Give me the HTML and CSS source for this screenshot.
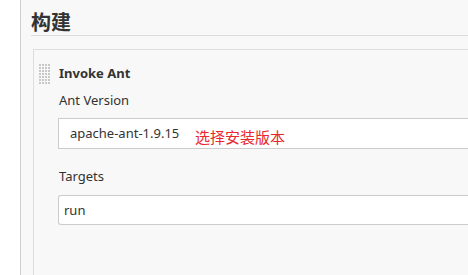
FILE: index.html
```html
<!DOCTYPE html>
<html>
<head>
<meta charset="utf-8">
<link rel="stylesheet" href="styles.css">
</head>
<body>
<div class="page">
  <div class="gutter"></div>
  <div class="main">
    <h2 class="section-title">构建</h2>
    <div class="card">
      <div class="card-head">
        <svg class="handle" width="12" height="20" viewBox="0 0 12 20">
          <defs>
            <pattern id="dots" width="3" height="3" patternUnits="userSpaceOnUse">
              <rect x="0" y="0" width="2" height="2" fill="#c8c8c8"/>
            </pattern>
          </defs>
          <rect x="0" y="0" width="12" height="20" fill="url(#dots)"/>
        </svg>
        <span class="card-title">Invoke Ant</span>
      </div>
      <div class="fields">
        <div class="label">Ant Version</div>
        <div class="select-wrap">
          <div class="select">apache-ant-1.9.15</div>
          <span class="note">选择安装版本</span>
        </div>
        <div class="label label-2">Targets</div>
        <div class="text-input">run</div>
      </div>
    </div>
  </div>
</div>
</body>
</html>
```

FILE: styles.css
```css
html, body {
  margin: 0;
  padding: 0;
  background: #fff;
  height: 100%;
}
body {
  font-family: "Noto Sans", "Noto Sans CJK SC", sans-serif;
  color: #333;
  overflow: hidden;
}
.page {
  display: flex;
  height: 275px;
}
.gutter {
  width: 20px;
  flex: none;
  background: #fff;
  border-right: 1px solid #cfcfcf;
}
.main {
  flex: 1;
  display: flex;
  flex-direction: column;
  background: #f8f8f8;
  padding: 9px 0 0 10px;
  min-width: 0;
}
.section-title {
  margin: 0;
  font-family: "Noto Sans CJK SC", sans-serif;
  font-size: 20px;
  font-weight: 700;
  line-height: 26px;
  color: #333;
  border-bottom: 1px solid #dcdcdc;
}
.card {
  flex: 1;
  min-height: 0;
  margin: 13px 0 0 2px;
  border: 1px solid #dedede;
  border-right: none;
  border-bottom: none;
  padding: 14px 0 0 5px;
}
.card-head {
  display: flex;
  align-items: flex-start;
  gap: 8px;
  height: 18px;
}
.handle {
  display: block;
  flex: none;
}
.card-title {
  font-size: 13px;
  font-weight: 700;
  line-height: 18px;
}
.fields {
  margin: 9px 0 0 19px;
}
.label {
  font-size: 13px;
  line-height: 18px;
  padding-left: 1px;
  margin-bottom: 9px;
}
.label-2 {
  margin-top: 18px;
  margin-bottom: 10px;
}
.select-wrap {
  position: relative;
}
.select {
  height: 29px;
  line-height: 29px;
  background: #fff;
  border: 1px solid #cccccc;
  border-right: none;
  padding-left: 11px;
  font-size: 13px;
}
.note {
  position: absolute;
  left: 137px;
  top: 9px;
  font-family: "Noto Sans CJK SC", sans-serif;
  font-size: 15px;
  line-height: 20px;
  color: #e8262c;
}
.text-input {
  height: 28px;
  line-height: 28px;
  background: #fff;
  border: 1px solid #cccccc;
  border-right: none;
  border-radius: 3px 0 0 3px;
  padding-left: 5px;
  font-size: 13px;
}
```
